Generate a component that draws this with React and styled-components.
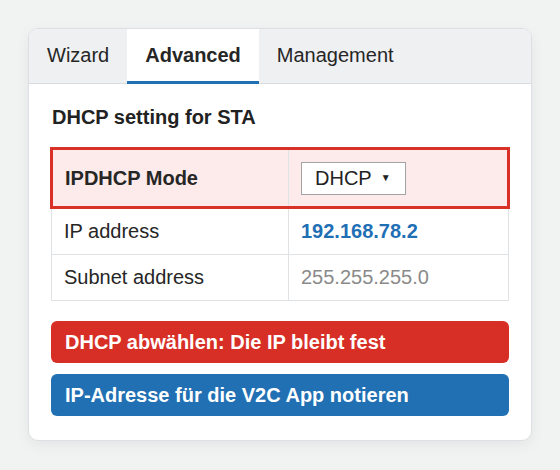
import React from 'react'
import styled, { createGlobalStyle } from 'styled-components'

const GlobalStyle = createGlobalStyle`
  * { box-sizing: border-box; }
  body {
    margin: 0;
    background: #f1f2f2;
    font-family: "Liberation Sans", Arial, sans-serif;
    color: #262626;
  }
`

const Page = styled.div`
  padding: 28px;
`

const Card = styled.div`
  width: 504px;
  background: #fff;
  border: 1px solid #dcdfe3;
  border-radius: 10px;
  box-shadow: 0 4px 14px rgba(0, 0, 0, 0.06);
  overflow: hidden;
`

const TabBar = styled.div`
  display: flex;
  height: 55px;
  background: #eff0f2;
  border-bottom: 1px solid #d8dce1;
`

const Tab = styled.div`
  padding: 0 18px;
  font-size: 20px;
  font-weight: ${p => (p.$active ? 700 : 400)};
  background: ${p => (p.$active ? '#fff' : 'transparent')};
  border-bottom: 3px solid ${p => (p.$active ? '#2170b3' : 'transparent')};
  margin-bottom: -1px;
  line-height: 52px;
  color: #262626;
`

const Body = styled.div`
  padding: 21px 22px 24px;
`

const Heading = styled.h2`
  margin: 0 0 18px 1px;
  font-size: 20px;
  line-height: 24px;
  font-weight: 700;
  color: #222;
`

const Table = styled.div`
  display: flex;
  flex-direction: column;
`

const Row = styled.div`
  display: grid;
  grid-template-columns: ${p => (p.$highlight ? '235px' : '236px')} 1fr;
  height: ${p => (p.$highlight ? '62px' : '46px')};
  margin: ${p => (p.$highlight ? '0 -1px' : '0')};
  background: ${p => (p.$highlight ? '#fdeaea' : '#fff')};
  border: ${p => (p.$highlight ? '3px solid #d83127' : '1px solid #e0e3e6')};
  border-top: ${p => (p.$highlight ? '3px solid #d83127' : 'none')};
`

const Cell = styled.div`
  display: flex;
  align-items: center;
  padding: 0 12px;
  font-size: 20px;
  font-weight: ${p => (p.$bold ? 700 : 400)};
  color: ${p => p.$color || '#262626'};
  & + & {
    border-left: 1px solid #e0e3e6;
  }
`

const Select = styled.div`
  display: flex;
  align-items: center;
  width: 105px;
  height: 33px;
  padding-left: 13px;
  background: #fff;
  border: 1px solid #a3a3a3;
  font-size: 20px;
  color: #222;
`

const Caret = styled.span`
  margin-left: 9px;
  font-size: 10px;
  line-height: 1;
`

const Actions = styled.div`
  display: flex;
  flex-direction: column;
  gap: 11px;
  margin-top: 20px;
`

const Button = styled.button`
  height: 42px;
  padding: 0 14px;
  border: 0;
  border-radius: 6px;
  text-align: left;
  font-family: "Liberation Sans", Arial, sans-serif;
  font-size: 20px;
  font-weight: 700;
  color: #fff;
  background: ${p => (p.$tone === 'danger' ? '#d72f26' : '#2170b3')};
`

export default function App() {
  return (
    <Page>
      <GlobalStyle />
      <Card>
        <TabBar>
          <Tab>Wizard</Tab>
          <Tab $active>Advanced</Tab>
          <Tab>Management</Tab>
        </TabBar>
        <Body>
          <Heading>DHCP setting for STA</Heading>
          <Table>
            <Row $highlight>
              <Cell $bold>IPDHCP Mode</Cell>
              <Cell>
                <Select>
                  DHCP<Caret>▼</Caret>
                </Select>
              </Cell>
            </Row>
            <Row>
              <Cell>IP address</Cell>
              <Cell $bold $color="#1f6fb5">192.168.78.2</Cell>
            </Row>
            <Row>
              <Cell>Subnet address</Cell>
              <Cell $color="#8a8a8a">255.255.255.0</Cell>
            </Row>
          </Table>
          <Actions>
            <Button $tone="danger">DHCP abwählen: Die IP bleibt fest</Button>
            <Button>IP-Adresse für die V2C App notieren</Button>
          </Actions>
        </Body>
      </Card>
    </Page>
  )
}
